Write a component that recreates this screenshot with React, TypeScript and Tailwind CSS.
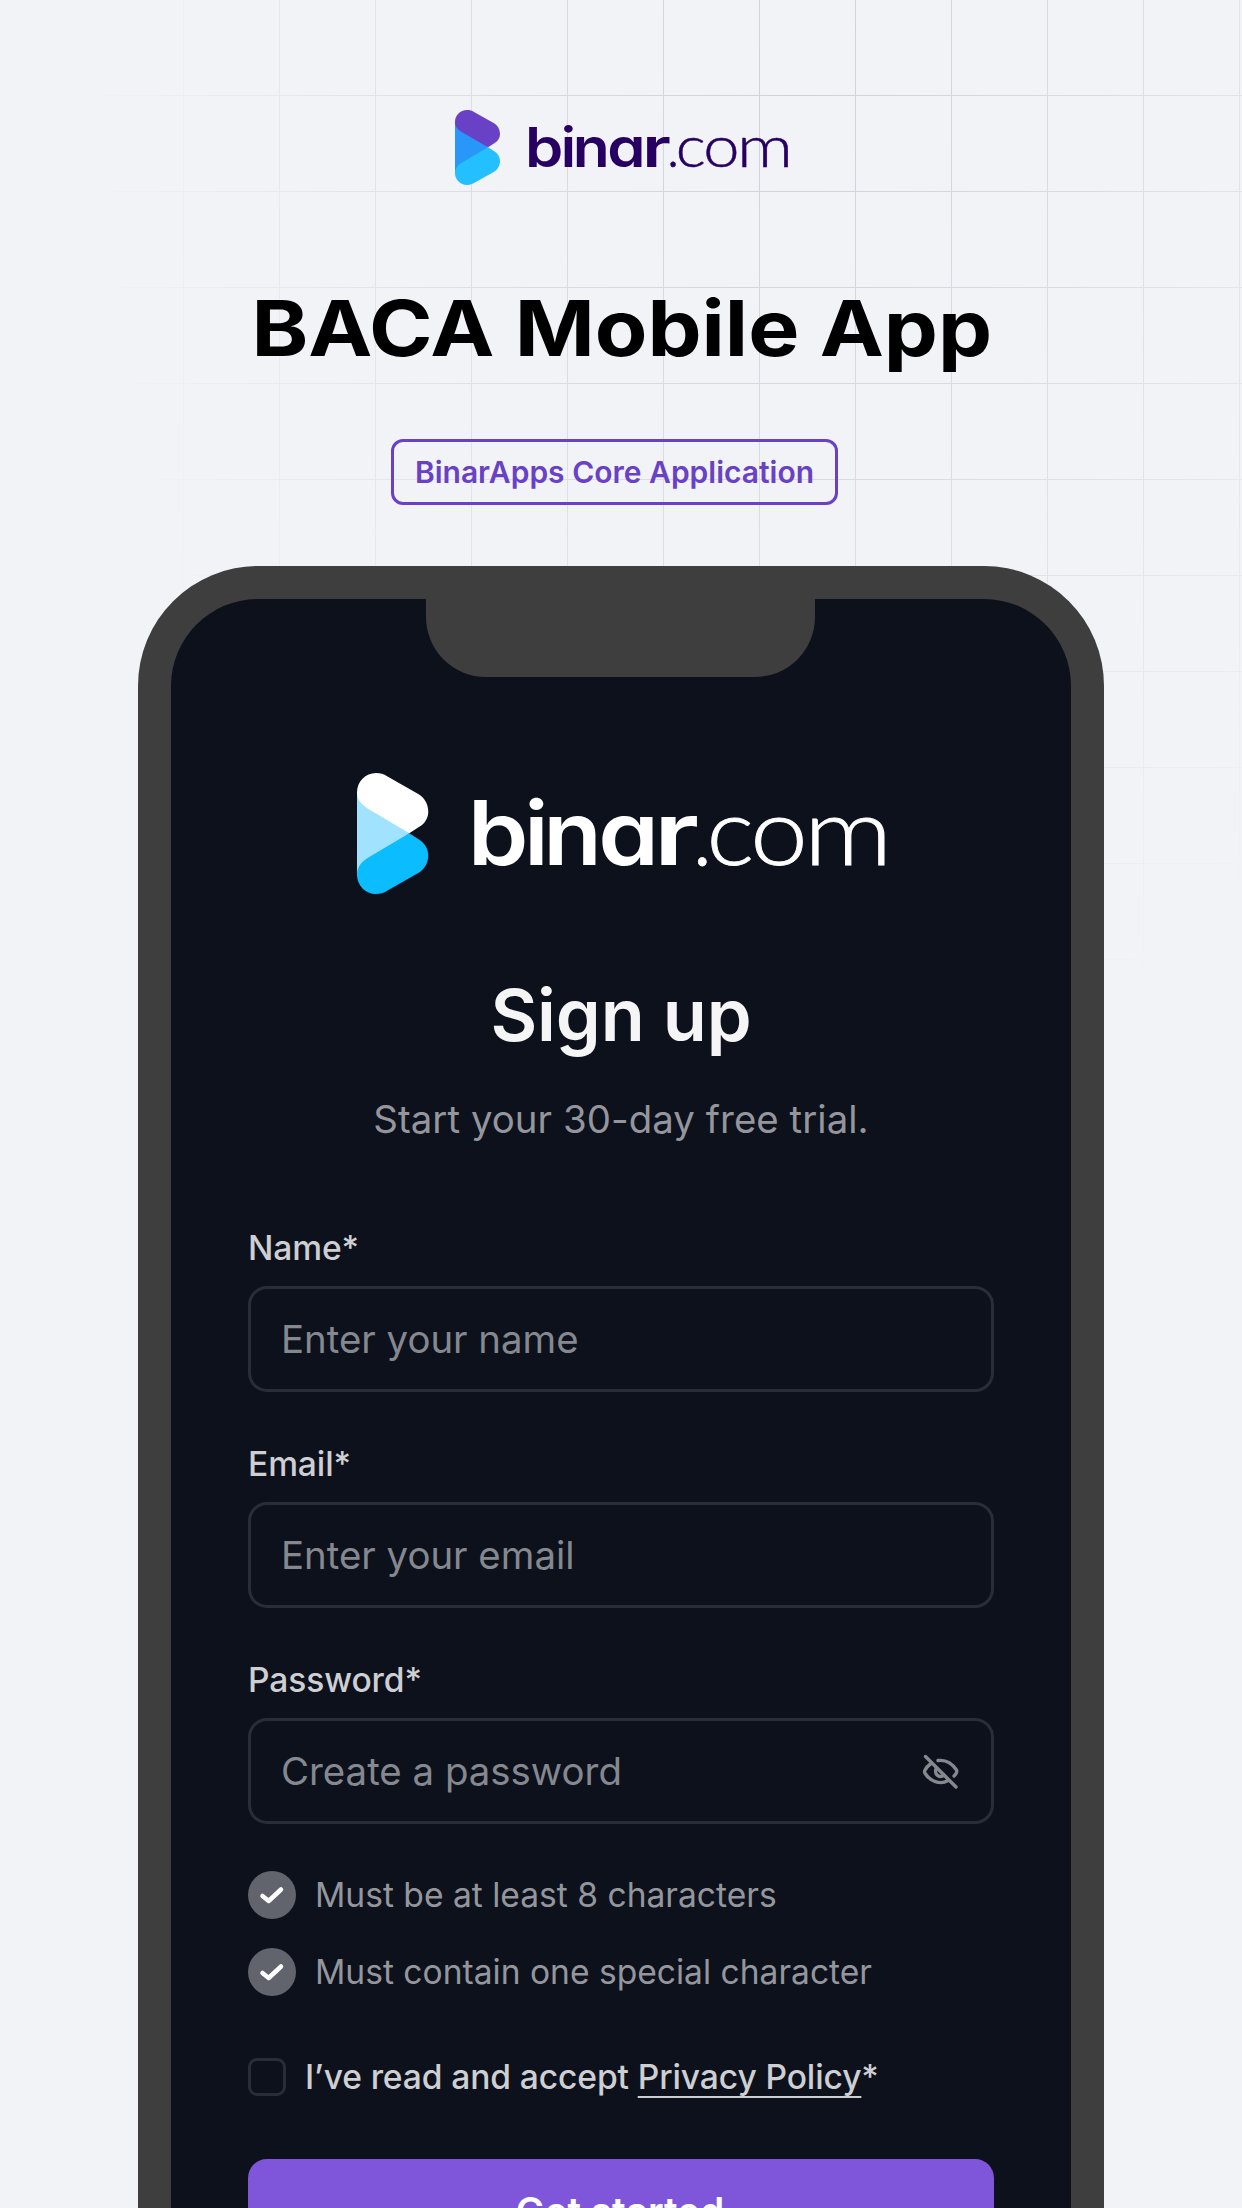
import React from "react";

type LogoProps = {
  className: string;
  top: string;
  middle: string;
  bottom: string;
  text: string;
};

const letterFeatures: React.CSSProperties = { fontFeatureSettings: '"cv11" 1' };

const boldLetters = [
  { char: "b", x: 210, width: 115 },
  { char: "i", x: 317, width: 46 },
  { char: "n", x: 353, width: 111 },
  { char: "a", x: 457, width: 115 },
  { char: "r", x: 562, width: 86 },
];

const lightLetters = [
  { char: ".", x: 635, width: 38 },
  { char: "c", x: 662, width: 90 },
  { char: "o", x: 745, width: 109 },
  { char: "m", x: 846, width: 168 },
];

function Logo({ className, top, middle, bottom, text }: LogoProps) {
  return (
    <svg viewBox="0 0 1002 225" className={className} preserveAspectRatio="none" overflow="visible">
      <path d="M0 36V192L40 170L99 112L40 60Z" fill={middle} />
      <path
        d="M0 36C0 16 16 0 36 0C44 0 51 2 57 6L116 39C128 46 135 58 135 72C135 83 129 94 118 100L99 112L20 66C8 58 0 50 0 36Z"
        fill={top}
      />
      <path
        d="M0 189C0 209 16 225 36 225C44 225 51 223 57 219L116 186C128 179 135 167 135 153C135 142 129 131 118 124L99 112L20 158C8 166 0 175 0 189Z"
        fill={bottom}
      />
      <g fill={text} fontFamily="Inter, sans-serif" fontSize="165" fontWeight="600" style={letterFeatures}>
        {boldLetters.map((l) => (
          <text key={l.char} x={l.x} y="171" textLength={l.width} lengthAdjust="spacingAndGlyphs">
            {l.char}
          </text>
        ))}
      </g>
      <g fill={text} stroke={text} strokeWidth="1.500" fontFamily="Lato, sans-serif" fontSize="174" fontWeight="300">
        {lightLetters.map((l) => (
          <text key={l.char} x={l.x} y="171" textLength={l.width} lengthAdjust="spacingAndGlyphs">
            {l.char}
          </text>
        ))}
      </g>
    </svg>
  );
}

function EyeOff() {
  return (
    <svg viewBox="0 0 50 50" className="mr-[2px] h-[50px] w-[50px]" fill="none" stroke="#85888e" strokeWidth="3.4" strokeLinecap="round">
      <path d="M10.500 10.500L41 41" />
      <path d="M23 14.500C31 13.500 37.500 18 41.500 24C42.300 25.500 42 27 39 30" />
      <path d="M16 17.500C12.500 20 11 22 9.800 24.500C9.300 25.500 9.500 26.500 10.200 27.500C15 35 25 39.500 33 34.500" />
      <path d="M21.500 22C19.500 25 20.500 29.500 25 30.500C26.500 30.600 28 30 29 29" />
    </svg>
  );
}

type FieldProps = { label: string; placeholder: string; children?: React.ReactNode };

function Field({ label, placeholder, children }: FieldProps) {
  return (
    <div className="flex flex-col">
      <div className="text-[33.6px] leading-[48px] font-medium tracking-[-0.1px] text-[#cecfd2]">{label}</div>
      <div className="mt-[14px] flex h-[106px] items-center justify-between rounded-[19px] border-[3px] border-[#292d37] pr-[24px] pl-[30px]">
        <span className="text-[38.4px] leading-[58px] text-[#85888e]">{placeholder}</span>
        {children}
      </div>
    </div>
  );
}

function Rule({ text }: { text: string }) {
  return (
    <div className="flex h-[48px] items-center gap-[19px]">
      <div className="flex h-[48px] w-[48px] items-center justify-center rounded-full bg-[#61646c]">
        <svg viewBox="0 0 48 48" className="h-[48px] w-[48px]" fill="none" stroke="#fff" strokeWidth="4.5" strokeLinecap="round" strokeLinejoin="round">
          <path d="M14.500 25L20.700 30L33 18.500" />
        </svg>
      </div>
      <span className="text-[33.6px] leading-[48px] text-[#94969c]">{text}</span>
    </div>
  );
}

export default function App() {
  return (
    <div className="relative flex h-[2208px] w-[1242px] flex-col items-center overflow-hidden bg-[#f1f3f7] font-['Inter',sans-serif]">
      <div className="absolute inset-0 bg-[linear-gradient(to_right,#cfd1d7_1px,transparent_1px),linear-gradient(to_bottom,#cfd1d7_1px,transparent_1px)] bg-[size:96px_96px] bg-[position:87px_95px] [mask-image:radial-gradient(ellipse_715px_1020px_at_800px_90px,black_0%,rgba(0,0,0,0.7)_40%,transparent_100%)]" />
      <header className="relative flex w-full flex-col items-center">
        <Logo className="mt-[110px] ml-[2px] h-[75px] w-[334px]" top="#6941c6" middle="#2897f9" bottom="#24bfff" text="#280062" />
        <h1 className="mt-[95px] ml-[1px] origin-center scale-x-[1.116] text-[77px] leading-[96px] font-bold whitespace-nowrap text-black">
          BACA Mobile App
        </h1>
        <div className="mt-[63px] mr-[13px] flex h-[66px] w-[447px] items-center justify-center rounded-[12px] border-[3px] border-[#6941c6] text-[30px] font-semibold whitespace-nowrap text-[#6941c6]">
          BinarApps Core Application
        </div>
      </header>
      <main className="relative mt-[61px] flex h-[1900px] w-[966px] shrink-0 flex-col items-center rounded-t-[120px] border-[33px] border-b-0 border-[#3e3e3e] bg-[#0d111c]">
        <div className="mr-[1px] h-[78px] w-[389px] shrink-0 rounded-b-[60px] bg-[#3e3e3e]" />
        <Logo className="mt-[96px] h-[121px] w-[529px] shrink-0" top="#ffffff" middle="#a1e3ff" bottom="#0bbcff" text="#ffffff" />
        <h2 className="mt-[76px] text-[72px] leading-[90px] font-semibold tracking-[-0.1px] text-[#f5f5f6]">Sign up</h2>
        <p className="mt-[30px] text-[38.4px] leading-[58px] tracking-[0.05px] text-[#94969c]">Start your 30-day free trial.</p>
        <form className="mt-[76px] flex w-[746px] flex-col">
          <div className="flex flex-col gap-[48px]">
            <Field label="Name*" placeholder="Enter your name" />
            <Field label="Email*" placeholder="Enter your email" />
            <Field label="Password*" placeholder="Create a password">
              <EyeOff />
            </Field>
          </div>
          <div className="mt-[47px] flex flex-col gap-[29px]">
            <Rule text="Must be at least 8 characters" />
            <Rule text="Must contain one special character" />
          </div>
          <div className="mt-[57px] flex h-[48px] items-center gap-[19px]">
            <div className="h-[38px] w-[38px] rounded-[9px] border-[3px] border-[#292d37]" />
            <div className="text-[33.6px] leading-[48px] font-medium tracking-[-0.11px] whitespace-nowrap text-[#cecfd2]">
              I’ve read and accept{" "}
              <span className="underline decoration-[2.4px] underline-offset-[7px] [text-decoration-skip-ink:none]">Privacy Policy</span>*
            </div>
          </div>
          <button type="button" className="mt-[58px] flex h-[106px] items-center justify-center rounded-[19px] bg-[#7f56d9] pr-[2px] text-[38.4px] font-semibold tracking-[0.1px] text-white">
            Get started
          </button>
        </form>
      </main>
    </div>
  );
}
